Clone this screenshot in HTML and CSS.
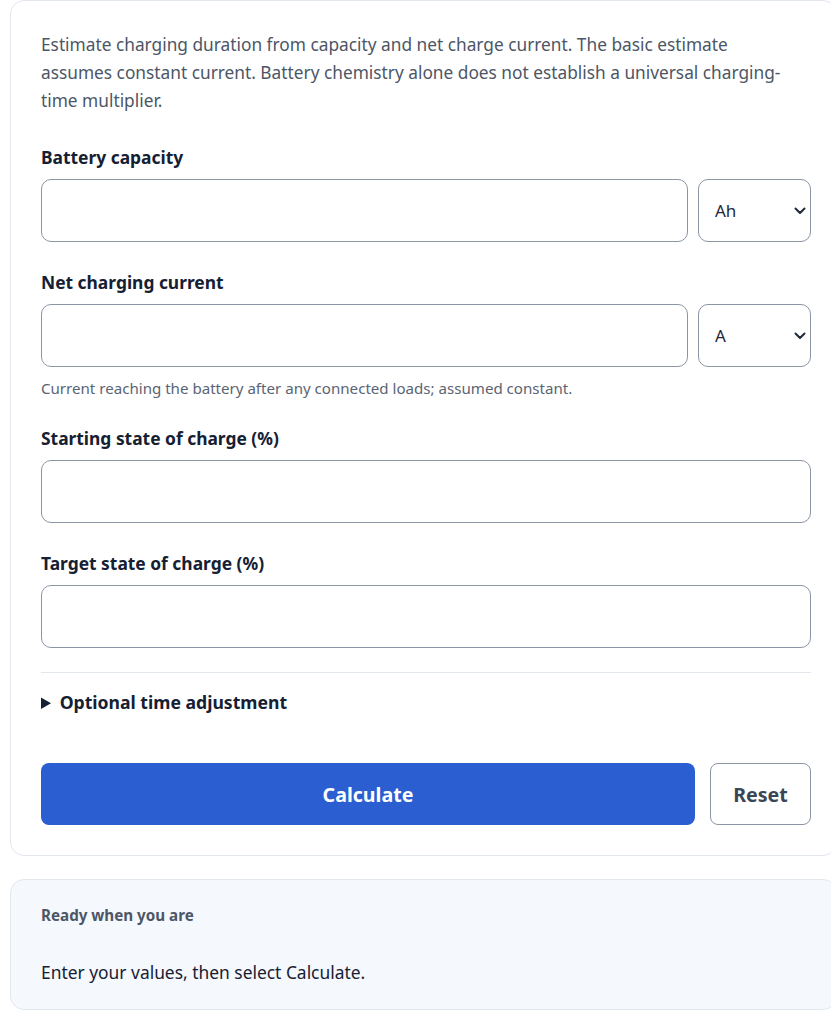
FILE: index.html
```html
<!DOCTYPE html>
<html lang="en">
<head>
  <meta charset="UTF-8">
  <title>Charging Time Calculator</title>
  <link rel="stylesheet" href="styles.css">
</head>
<body>
  <main class="calc">
    <section class="card">
      <p class="intro">Estimate charging duration from capacity and net charge current. The basic estimate assumes constant current. Battery chemistry alone does not establish a universal charging-time multiplier.</p>

      <div class="field">
        <label for="capacity">Battery capacity</label>
        <div class="row">
          <input type="text" id="capacity">
          <div class="unit">
            <select id="capacity-unit">
              <option>Ah</option>
              <option>mAh</option>
              <option>Wh</option>
            </select>
            <svg class="chevron" viewBox="0 0 12 8" width="12" height="8"><path d="M1.5 1.5 L6 6 L10.5 1.5" fill="none" stroke="#1f2937" stroke-width="2" stroke-linecap="round" stroke-linejoin="round"/></svg>
          </div>
        </div>
      </div>

      <div class="field">
        <label for="current">Net charging current</label>
        <div class="row">
          <input type="text" id="current">
          <div class="unit">
            <select id="current-unit">
              <option>A</option>
              <option>mA</option>
            </select>
            <svg class="chevron" viewBox="0 0 12 8" width="12" height="8"><path d="M1.5 1.5 L6 6 L10.5 1.5" fill="none" stroke="#1f2937" stroke-width="2" stroke-linecap="round" stroke-linejoin="round"/></svg>
          </div>
        </div>
        <p class="hint">Current reaching the battery after any connected loads; assumed constant.</p>
      </div>

      <div class="field">
        <label for="start">Starting state of charge (%)</label>
        <input type="text" id="start">
      </div>

      <div class="field last">
        <label for="target">Target state of charge (%)</label>
        <input type="text" id="target">
      </div>

      <details class="extra">
        <summary>Optional time adjustment</summary>
      </details>

      <div class="actions">
        <button type="button" class="btn primary">Calculate</button>
        <button type="button" class="btn secondary">Reset</button>
      </div>
    </section>

    <section class="result">
      <h2>Ready when you are</h2>
      <p>Enter your values, then select Calculate.</p>
    </section>
  </main>
</body>
</html>
```

FILE: styles.css
```css
body {
  margin: 0;
  font-family: "Noto Sans", "Open Sans", sans-serif;
  color: #152033;
  background: #fff;
  overflow-x: hidden;
}
.calc {
  padding: 0 0 0 10px;
}
.card {
  box-sizing: border-box;
  width: 827px;
  border: 1px solid #e3e7ee;
  border-radius: 14px;
  padding: 30px 25px 30px 30px;
  background: #fff;
}
.intro {
  max-width: 755px;
  margin: 0 0 30px;
  font-size: 17.3px;
  line-height: 28px;
  color: #4c5666;
}
.field {
  margin-bottom: 28px;
}
.field.last {
  margin-bottom: 0;
}
.field label {
  display: block;
  margin-bottom: 10px;
  font-size: 17.4px;
  line-height: 24px;
  font-weight: 700;
  color: #152033;
}
.row {
  display: flex;
  gap: 10px;
}
input[type="text"], select {
  box-sizing: border-box;
  height: 63px;
  border: 1px solid #8c95a4;
  border-radius: 10px;
  background: #fff;
  font-family: inherit;
  font-size: 17px;
  color: #1f2937;
}
input[type="text"] {
  display: block;
  width: 100%;
  padding: 0 16px;
}
.row input[type="text"] {
  flex: 1;
}
.unit {
  position: relative;
  width: 113px;
  flex: none;
}
.unit select {
  width: 100%;
  padding: 0 16px;
  appearance: none;
  -webkit-appearance: none;
}
.chevron {
  position: absolute;
  right: 5px;
  top: 28px;
  pointer-events: none;
}
.hint {
  margin: 11px 0 0;
  font-size: 15.1px;
  line-height: 20px;
  color: #5a6473;
}
.extra {
  margin-top: 24px;
  padding-top: 17px;
  border-top: 1px solid #e3e7ee;
}
.extra summary {
  font-size: 17.6px;
  line-height: 24px;
  font-weight: 700;
  color: #152033;
  cursor: pointer;
}
.actions {
  display: flex;
  gap: 15px;
  margin-top: 49px;
}
.btn {
  height: 62px;
  border-radius: 8px;
  font-family: inherit;
  font-weight: 700;
  font-size: 19.6px;
  cursor: pointer;
}
.primary {
  flex: 1;
  border: none;
  background: #2b5ed0;
  color: #fff;
}
.secondary {
  width: 101px;
  border: 1px solid #8c95a4;
  background: #fff;
  color: #3a4556;
}
.result {
  box-sizing: border-box;
  width: 827px;
  margin-top: 23px;
  border: 1px solid #e3e7ee;
  border-radius: 14px;
  padding: 25px 30px 23px;
  background: #f5f8fc;
}
.result h2 {
  margin: 0 0 33px;
  font-size: 15.2px;
  line-height: 20px;
  font-weight: 700;
  color: #4c5666;
}
.result p {
  margin: 0;
  font-size: 17.4px;
  line-height: 28px;
  color: #152033;
}
```
